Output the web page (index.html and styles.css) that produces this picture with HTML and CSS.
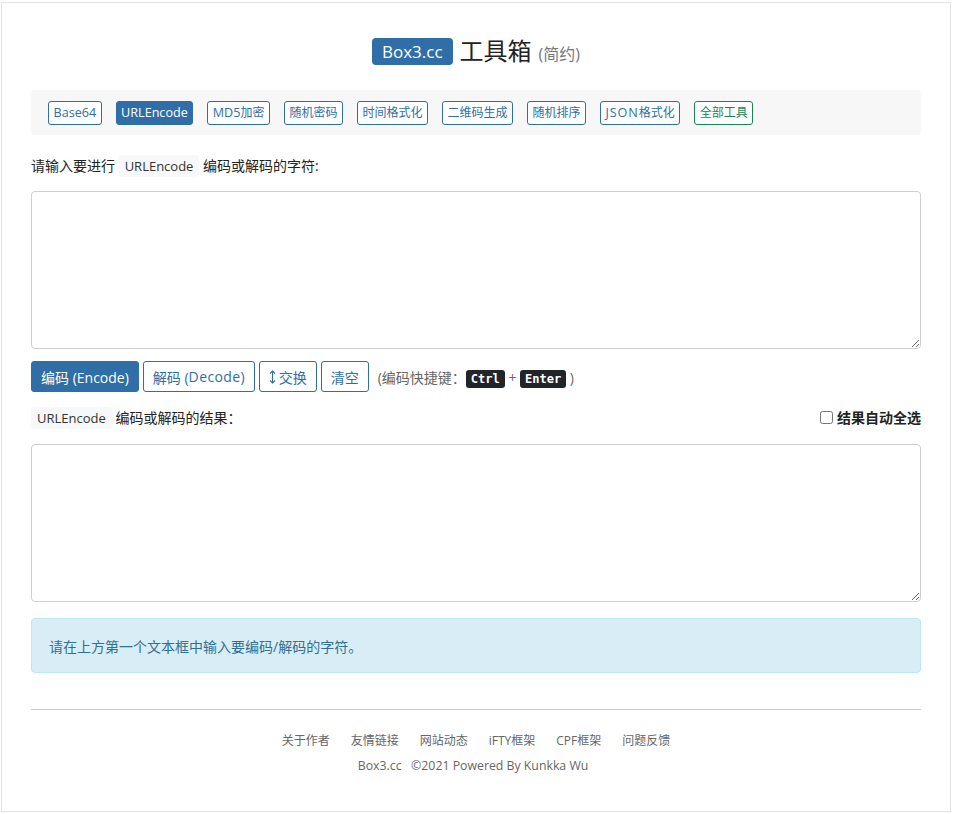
FILE: index.html
```html
<!DOCTYPE html>
<html lang="zh-CN">
<head>
<meta charset="utf-8">
<title>Box3.cc 工具箱 - URLEncode</title>
<link rel="stylesheet" href="styles.css">
</head>
<body>
<div class="page">
  <header class="header">
    <span class="brand">Box3.cc</span>
    <span class="title">工具箱</span>
    <span class="subtitle">(简约)</span>
  </header>

  <nav class="nav">
    <a class="nbtn"><span class="en">Base64</span></a>
    <a class="nbtn active"><span class="en">URLEncode</span></a>
    <a class="nbtn"><span class="en">MD5</span>加密</a>
    <a class="nbtn">随机密码</a>
    <a class="nbtn">时间格式化</a>
    <a class="nbtn">二维码生成</a>
    <a class="nbtn">随机排序</a>
    <a class="nbtn"><span class="en wide">JSON</span>格式化</a>
    <a class="nbtn green">全部工具</a>
  </nav>

  <div class="label">请输入要进行 <code class="tag">URLEncode</code> 编码或解码的字符:</div>
  <textarea class="box"></textarea>

  <div class="actions">
    <button class="btn primary">编码 (Encode)</button>
    <button class="btn">解码 (<span class="en">Decode</span>)</button>
    <button class="btn"><svg class="swap" width="7" height="14" viewBox="0 0 7 14"><path d="M3.5 1 V13 M1 3.5 L3.5 1 L6 3.5 M1 10.5 L3.5 13 L6 10.5" fill="none" stroke="currentColor" stroke-width="1.1"/></svg>交换</button>
    <button class="btn">清空</button>
    <span class="hint">(编码快捷键：<kbd>Ctrl</kbd> + <kbd>Enter</kbd> )</span>
  </div>

  <div class="result-row">
    <div class="label2"><code class="tag">URLEncode</code> 编码或解码的结果：</div>
    <label class="check"><input type="checkbox">结果自动全选</label>
  </div>
  <textarea class="box"></textarea>

  <div class="alert">请在上方第一个文本框中输入要编码/解码的字符。</div>

  <footer class="footer">
    <div class="links">
      <a>关于作者</a><a>友情链接</a><a>网站动态</a><a>iFTY框架</a><a>CPF框架</a><a>问题反馈</a>
    </div>
    <div class="copy">Box3.cc&nbsp;&nbsp;&nbsp;©2021 Powered By Kunkka Wu</div>
  </footer>
</div>
</body>
</html>
```

FILE: styles.css
```css
* { box-sizing: border-box; }
html, body { margin: 0; padding: 0; background: #fff; }
body {
  font-family: "Open Sans", "Noto Sans CJK SC", sans-serif;
  color: #333;
  font-size: 14px;
}
.page {
  width: 950px;
  height: 810px;
  margin: 2px 0 0 1px;
  border: 1px solid #e3e3e3;
  padding: 0 29px;
}
.header {
  display: flex;
  justify-content: center;
  align-items: center;
  height: 42px;
  margin-top: 27px;
}
.brand {
  background: #2f6ea7;
  color: #fff;
  font-size: 17px;
  line-height: 27px;
  height: 27px;
  padding: 0 10px;
  border-radius: 4px;
}
.title {
  font-size: 24px;
  color: #222;
  margin-left: 7px;
  line-height: 30px;
}
.subtitle {
  font-size: 16px;
  color: #777;
  margin-left: 7px;
  margin-top: 4px;
}
.nav {
  margin-top: 18px;
  height: 45px;
  background: #f7f7f7;
  border-radius: 4px;
  display: flex;
  align-items: center;
  gap: 14px;
  padding-left: 17px;
}
.nbtn {
  height: 24px;
  line-height: 22px;
  border: 1px solid #2f6ea7;
  color: #2f6ea7;
  border-radius: 3px;
  font-size: 12px;
  padding: 0 4.5px;
  background: #fff;
}
.nbtn .en { font-size: 12.6px; }
.nbtn .en.wide { letter-spacing: 0.9px; }
.nbtn.active { background: #2f6ea7; color: #fff; }
.nbtn.green { border-color: #198754; color: #198754; }
.label {
  margin-top: 19px;
  height: 24px;
  line-height: 24px;
  font-size: 14px;
  color: #222;
}
.tag {
  font-family: "Open Sans", sans-serif;
  font-size: 13px;
  background: #f6f8fa;
  color: #333;
  padding: 2px 6px;
  border-radius: 3px;
}
.box {
  display: block;
  width: 890px;
  height: 158px;
  margin-top: 13px;
  border: 1px solid #cfcfcf;
  border-radius: 4px;
  resize: vertical;
  font-family: inherit;
}
.actions {
  margin-top: 12px;
  display: flex;
  align-items: center;
  gap: 4px;
}
.btn {
  height: 31px;
  border: 1px solid #2f6ea7;
  background: #fff;
  color: #2f6ea7;
  border-radius: 3px;
  font-family: inherit;
  font-size: 14px;
  padding: 0 9px;
  display: inline-flex;
  align-items: center;
  white-space: pre;
}
.btn .en { letter-spacing: 0.4px; }
.btn.primary { background: #2f6ea7; color: #fff; }
.swap { margin-right: 3px; }
.hint {
  margin-left: 5px;
  color: #666;
  font-size: 14px;
}
kbd {
  font-family: "DejaVu Sans Mono", monospace;
  font-size: 12px;
  background: #212529;
  color: #fff;
  padding: 2px 5px;
  border-radius: 3px;
  font-weight: bold;
}
.result-row {
  margin-top: 11px;
  height: 28px;
  display: flex;
  justify-content: space-between;
  align-items: center;
}
.label2 { font-size: 14px; color: #222; }
.check { font-weight: bold; font-size: 14px; color: #222; display: flex; align-items: center; gap: 4px; }
.check input { margin: 0; width: 13px; height: 13px; }
.result-row + .box { margin-top: 13px; }
.alert {
  margin-top: 16px;
  height: 55px;
  background: #d9edf7;
  border: 1px solid #bce8f1;
  border-radius: 4px;
  color: #31708f;
  font-size: 14px;
  padding: 0 17px;
  display: flex;
  align-items: center;
}
.footer {
  margin-top: 36px;
  border-top: 1px solid #ccc;
  text-align: center;
  color: #666;
  font-size: 12px;
}
.links {
  margin-top: 21px;
  display: flex;
  justify-content: center;
  gap: 21px;
}
.copy { margin-top: 8px; font-size: 12.3px; padding-right: 6px; }
```
